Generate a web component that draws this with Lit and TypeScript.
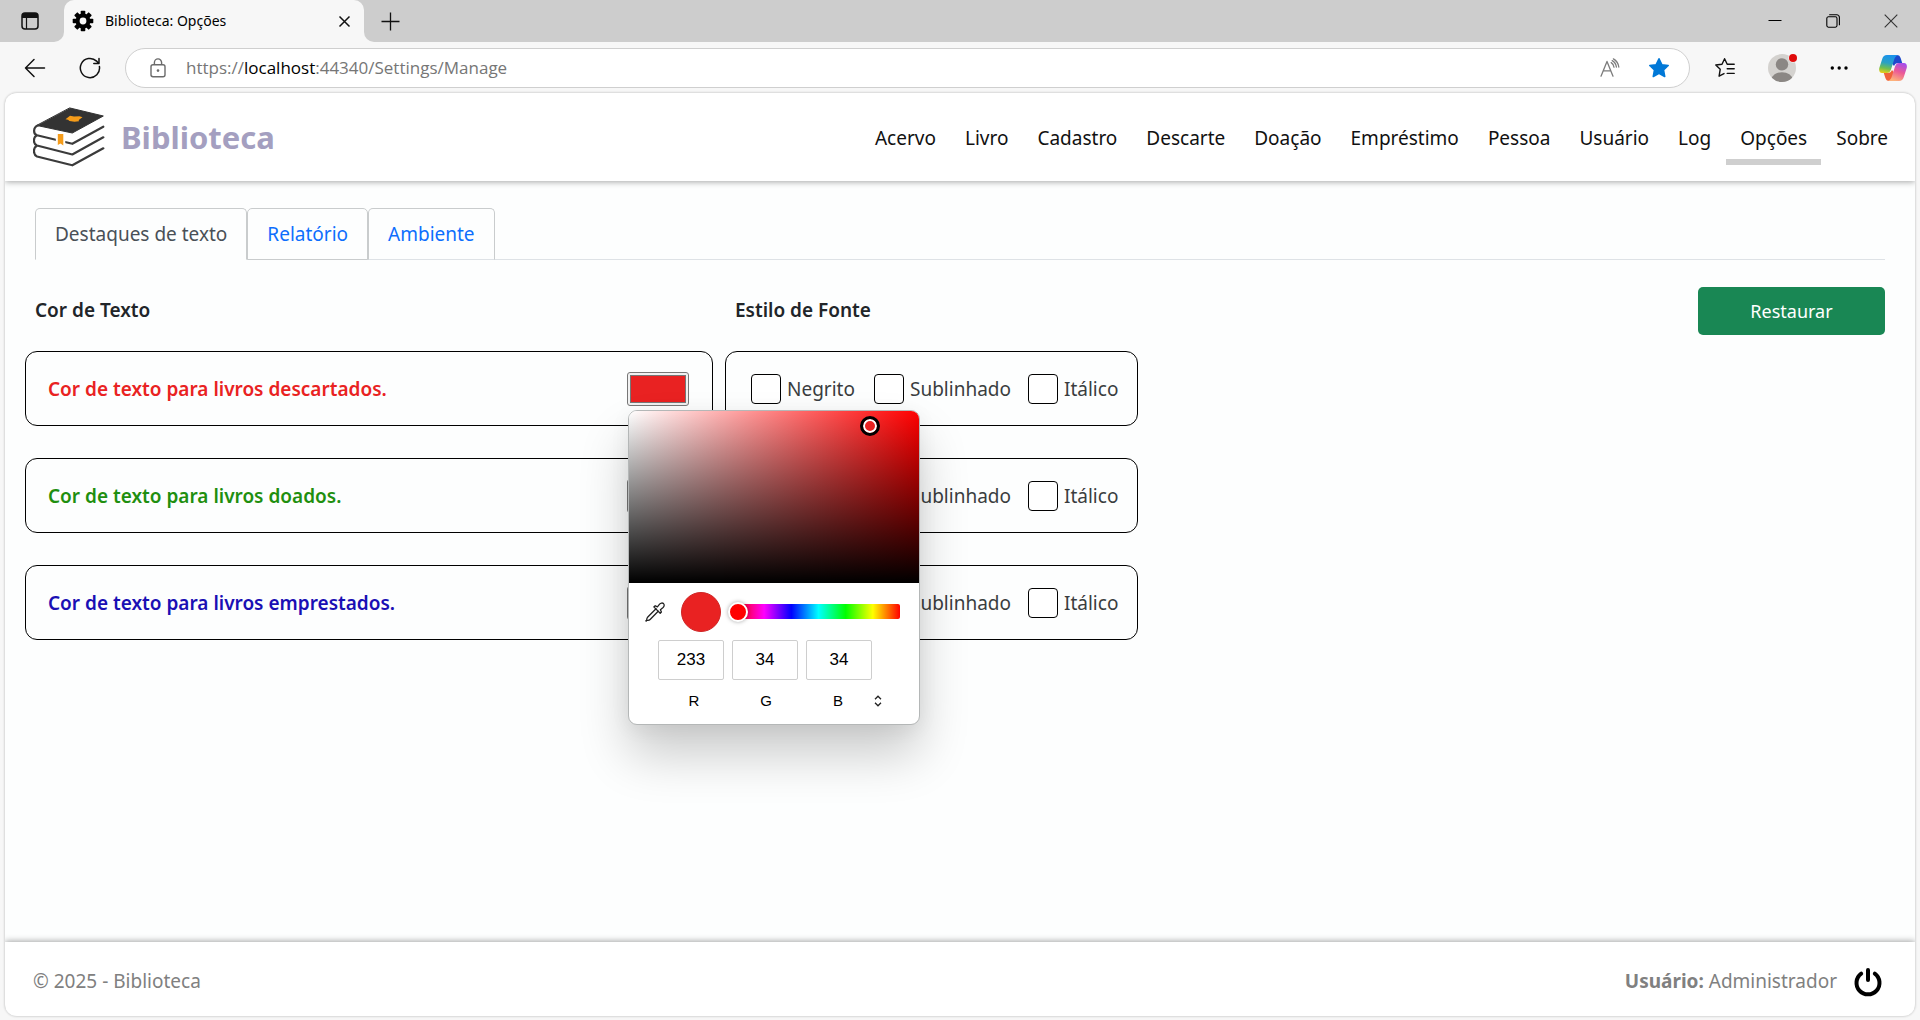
import { LitElement, html, css, svg } from "lit";
import { customElement, property } from "lit/decorators.js";
import { classMap } from "lit/directives/class-map.js";

const baseStyles = css`
  *,
  *::before,
  *::after {
    box-sizing: border-box;
  }
  button {
    margin: 0;
    padding: 0;
    border: 0;
    background: none;
    font: inherit;
    color: inherit;
    cursor: pointer;
  }
  svg {
    display: block;
    flex: none;
  }
  a {
    color: inherit;
    text-decoration: none;
  }
`;

const gearTeeth = [0, 45, 90, 135, 180, 225, 270, 315];

/** Browser window frame: tab strip and address bar. */
@customElement("browser-bar")
class BrowserBar extends LitElement {
  static styles = [
    baseStyles,
    css`
      :host {
        display: block;
        color: #000;
      }
      .strip {
        display: flex;
        height: 42px;
        background: #f7f7f7;
      }
      .strip-start {
        display: flex;
        align-items: center;
        width: 64px;
        padding-left: 20px;
        background: #cdcdcd;
        border-bottom-right-radius: 10px;
      }
      .tab-back {
        width: 300px;
        background: linear-gradient(#cdcdcd 50%, #f7f7f7 50%);
      }
      .tab {
        display: flex;
        align-items: center;
        height: 42px;
        padding: 0 12px 0 8px;
        background: #f7f7f7;
        border-radius: 10px 10px 0 0;
      }
      .tab-title {
        flex: 1;
        padding-left: 11px;
        font-size: 14px;
        line-height: 20px;
      }
      .strip-end {
        flex: 1;
        display: flex;
        align-items: center;
        justify-content: space-between;
        padding-left: 16px;
        background: #cdcdcd;
        border-bottom-left-radius: 10px;
      }
      .window-buttons {
        display: flex;
      }
      .window-button {
        display: grid;
        place-items: center;
        width: 58px;
        height: 42px;
      }
      .toolbar {
        display: flex;
        align-items: center;
        height: 51px;
        padding: 0 10px 0 15px;
        background: #f7f7f7;
      }
      .tool {
        display: grid;
        place-items: center;
        width: 40px;
        height: 40px;
      }
      .nav-tools {
        display: flex;
        gap: 15px;
      }
      .address {
        flex: 1;
        display: flex;
        align-items: center;
        height: 40px;
        margin: 0 15px;
        padding: 0 10px 0 22px;
        background: #fff;
        border: 1px solid #cfcfcf;
        border-radius: 20px;
      }
      .url {
        flex: 1;
        padding-left: 18px;
        font-family: "Open Sans", "Segoe UI", sans-serif;
        font-size: 17px;
        line-height: 24px;
        color: #767676;
      }
      .host-name {
        color: #000;
      }
      .address-tools {
        display: flex;
        gap: 9px;
      }
      .end-tools {
        display: flex;
        gap: 17px;
      }
      .narrow {
        width: 34px;
      }
    `,
  ];

  render() {
    return html`
      <div class="strip">
        <div class="strip-start">
          <button aria-label="Menu de guias">
            <svg width="20" height="20" viewBox="0 0 20 20">
              <rect x="2" y="2" width="16" height="16" rx="3" fill="none" stroke="#111" stroke-width="1.5" />
              <path d="M2 7V5a3 3 0 0 1 3-3h10a3 3 0 0 1 3 3v2z" fill="#111" />
              <path d="M6.5 7v11" stroke="#111" stroke-width="1.2" />
            </svg>
          </button>
        </div>
        <div class="tab-back">
          <div class="tab">
            <svg width="22" height="22" viewBox="-11 -11 22 22">
              ${gearTeeth.map(
                (angle) => svg`<rect x="-2.3" y="-10.3" width="4.6" height="6" rx="0.8" transform="rotate(${angle})" />`,
              )}
              <circle r="5.4" fill="none" stroke="#000" stroke-width="4" />
            </svg>
            <span class="tab-title">Biblioteca: Opções</span>
            <button aria-label="Fechar guia">
              <svg width="16" height="16" viewBox="0 0 16 16">
                <path d="M3.500 3.500l10 10M13.500 3.500L3.500 13.500" stroke="#111" stroke-width="1.5" />
              </svg>
            </button>
          </div>
        </div>
        <div class="strip-end">
          <button aria-label="Nova guia">
            <svg width="20" height="20" viewBox="0 0 20 20">
              <path d="M10.5 1.5v18M1.5 10.5h18" stroke="#111" stroke-width="1.3" />
            </svg>
          </button>
          <div class="window-buttons">
            <button class="window-button" aria-label="Minimizar">
              <svg width="14" height="14" viewBox="0 0 14 14"><path d="M0.5 6.5h13" stroke="#000" /></svg>
            </button>
            <button class="window-button" aria-label="Restaurar janela">
              <svg width="14" height="14" viewBox="0 0 14 14" fill="none" stroke="#000" stroke-width="1.1">
                <rect x="0.8" y="2.8" width="10.2" height="10.4" rx="1.6" />
                <path d="M3.2 0.8h7.6a2.6 2.6 0 0 1 2.6 2.6v7.8" />
              </svg>
            </button>
            <button class="window-button" aria-label="Fechar janela">
              <svg width="14" height="14" viewBox="0 0 14 14">
                <path d="M0.7 0.7l12.6 12.6M13.3 0.7L0.7 13.3" stroke="#333" stroke-width="1.1" />
              </svg>
            </button>
          </div>
        </div>
      </div>
      <div class="toolbar">
        <div class="nav-tools">
          <button class="tool" aria-label="Voltar">
            <svg width="22" height="20" viewBox="0 0 22 20" fill="none" stroke="#111" stroke-width="1.5" stroke-linecap="round" stroke-linejoin="round">
              <path d="M20.5 10H1.5M10 1.5L1.5 10l8.5 8.5" />
            </svg>
          </button>
          <button class="tool" aria-label="Atualizar">
            <svg width="22" height="22" viewBox="0 0 22 22" fill="none" stroke="#111" stroke-width="1.5" stroke-linecap="round" stroke-linejoin="round">
              <path d="M20.4 9.4A9.6 9.6 0 1 1 17.6 4.1L19.6 6.4M20 1.4v5.2h-5.2" />
            </svg>
          </button>
        </div>
        <div class="address">
          <svg width="20" height="20" viewBox="0 0 20 20" fill="none" stroke="#6b6b6b" stroke-width="1.4">
            <rect x="3" y="6.7" width="14" height="12" rx="2" />
            <path d="M6.4 6.7V4.5a3.6 3.6 0 0 1 7.2 0v2.2" />
            <circle cx="10" cy="12.6" r="1.3" fill="#6b6b6b" stroke="none" />
          </svg>
          <span class="url">https://<span class="host-name">localhost</span>:44340/Settings/Manage</span>
          <div class="address-tools">
            <button class="tool" aria-label="Ler em voz alta">
              <svg width="22" height="20" viewBox="0 0 22 20" fill="none" stroke="#7c7c7c" stroke-width="1.3" stroke-linecap="round" stroke-linejoin="round">
                <path d="M2 18.2L8 3.4l6 14.8M4.2 12.8h7.6" />
                <path d="M12.2 4.6c1.6 1 2.6 2.6 2.8 4.6M13.2 2.6c2.4 1.3 3.8 3.4 4.2 6.4M14.4 0.9c3 1.7 4.9 4.6 5.4 8.1" />
              </svg>
            </button>
            <button class="tool" aria-label="Editar favorito">
              <svg width="22" height="22" viewBox="0 0 22 22">
                <path d="M11 1.8l2.8 5.9 6.4.8-4.7 4.5 1.2 6.5L11 16.4l-5.7 3.1 1.2-6.5L1.8 8.5l6.4-.8z" fill="#0078d7" stroke="#0078d7" stroke-width="1.6" stroke-linejoin="round" />
              </svg>
            </button>
          </div>
        </div>
        <div class="end-tools">
          <button class="tool" aria-label="Favoritos">
            <svg width="22" height="22" viewBox="0 0 22 22" fill="none" stroke="#111" stroke-width="1.4" stroke-linecap="round" stroke-linejoin="round">
              <path d="M13.4 7.2h-.2L10.6 1.7 8 7.2l-6.2.8 4.400 4.300-1.100 6.900L10 16.600M13.200 7.200h7M13.200 11.800h7M13.200 16.400h7" />
            </svg>
          </button>
          <button class="tool" aria-label="Perfil">
            <svg width="30" height="30" viewBox="0 0 30 30">
              <clipPath id="face"><circle cx="15" cy="15" r="14" /></clipPath>
              <circle cx="15" cy="15" r="14" fill="#d4d2cf" />
              <g clip-path="url(#face)" fill="#8b8784">
                <circle cx="15" cy="11.4" r="6.2" />
                <ellipse cx="15" cy="26.6" rx="10.4" ry="7.4" />
              </g>
              <circle cx="26" cy="5" r="4.6" fill="#f7f7f7" />
              <circle cx="26" cy="5" r="4" fill="#e00b0b" />
            </svg>
          </button>
          <button class="tool" aria-label="Mais opções">
            <svg width="18" height="6" viewBox="0 0 18 6">
              <circle cx="2.3" cy="3" r="1.7" /><circle cx="9.2" cy="3" r="1.7" /><circle cx="16" cy="3" r="1.7" />
            </svg>
          </button>
          <button class="tool narrow" aria-label="Copilot">
            <svg width="28" height="26" viewBox="0 0 28 26">
              <defs>
                <linearGradient id="cp-left" x1="0.3" y1="0" x2="0.1" y2="1">
                  <stop offset="0" stop-color="#1b93ea" />
                  <stop offset="0.4" stop-color="#2aa1c4" />
                  <stop offset="0.7" stop-color="#6fbf51" />
                  <stop offset="1" stop-color="#f6cf12" />
                </linearGradient>
                <linearGradient id="cp-right" x1="0.8" y1="0" x2="0.4" y2="1">
                  <stop offset="0" stop-color="#a24df0" />
                  <stop offset="0.5" stop-color="#ec5a96" />
                  <stop offset="1" stop-color="#fdb27a" />
                </linearGradient>
              </defs>
              <path d="M12 0h5.500C20 0 21 1 21.800 3.500L23.200 8H19.500c-2.500 0-3.600 1-4.500 3L12.500 8z" fill="#1d49cc" />
              <path d="M16 26h-5.500C8 26 7 25 6.200 22.500L4.800 18H8.500c2.500 0 3.600-1 4.500-3l2.500 3z" fill="#f0623a" />
              <path d="M8 0H19C17 1 16 2 15 5L12 14.500C11 17 10 18 8 18H3C.5 18-.3 15.500.3 13L3.200 4C4 1.200 5.500 0 8 0z" fill="url(#cp-left)" />
              <path d="M20 26H9C11 25 12 24 13 21L16 11.500C17 9 18 8 20 8H25C27.500 8 28.300 10.500 27.700 13L24.800 22C24 24.800 22.500 26 20 26z" fill="url(#cp-right)" />
            </svg>
          </button>
        </div>
      </div>
    `;
  }
}

/** Floating colour palette opened from a colour field. */
@customElement("color-palette")
class ColorPalette extends LitElement {
  @property({ attribute: false }) channels: [string, number][] = [];

  static styles = [
    baseStyles,
    css`
      :host {
        display: block;
        width: 292px;
        overflow: hidden;
        font-family: "Liberation Sans", Arial, sans-serif;
        color: #000;
        background: #fff;
        border: 1px solid #b4b7b7;
        border-radius: 9px;
        box-shadow: 0 30px 50px rgba(0, 0, 0, 0.2), 0 4px 20px rgba(0, 0, 0, 0.06);
      }
      .spectrum {
        position: relative;
        height: 172px;
        background: linear-gradient(to top, #000, transparent), linear-gradient(to right, #fff, #f00);
      }
      .marker {
        position: absolute;
        left: 83%;
        top: 9%;
        width: 20px;
        height: 20px;
        margin: -10px;
        background: #e92222;
        border: 3px solid #000;
        border-radius: 50%;
        box-shadow: inset 0 0 0 2px #fff;
      }
      .mix {
        display: flex;
        align-items: center;
        gap: 16px;
        padding: 9px 19px 8px 16px;
      }
      .swatch {
        width: 40px;
        height: 40px;
        background: #e92222;
        border: 1px solid #cf2525;
        border-radius: 50%;
      }
      .hue {
        flex: 1;
        display: flex;
        height: 15px;
        background: linear-gradient(to right, #f00, #f0f, #00f, #0ff, #0f0, #ff0, #f00);
        border-radius: 2px;
      }
      .hue-range {
        appearance: none;
        flex: 1;
        min-width: 0;
        height: 15px;
        margin: 0 -9px;
        background: none;
      }
      .hue-range::-webkit-slider-runnable-track {
        height: 20px;
        background: none;
      }
      .hue-range::-webkit-slider-thumb {
        appearance: none;
        width: 20px;
        height: 20px;
        background: #f00;
        border: 2px solid #fff;
        border-radius: 50%;
        box-shadow: 0 0 4px rgba(0, 0, 0, 0.35);
      }
      .channels {
        display: flex;
        gap: 8px;
        padding-left: 29px;
      }
      .channel {
        width: 66px;
        height: 40px;
        padding: 0;
        font: 17px "Liberation Sans", Arial, sans-serif;
        text-align: center;
        color: #000;
        background: #fff;
        border: 1px solid #cecece;
        border-radius: 2px;
      }
      .legend {
        display: flex;
        align-items: center;
        padding: 12px 0 14px 29px;
        font-size: 15px;
        line-height: 18px;
      }
      .letter {
        width: 72px;
        text-align: center;
      }
    `,
  ];

  render() {
    return html`
      <div class="spectrum"><div class="marker"></div></div>
      <div class="mix">
        <button aria-label="Conta-gotas">
          <svg width="20" height="20" viewBox="0 0 20 20" fill="none" stroke="#222" stroke-width="1.3" stroke-linejoin="round" stroke-linecap="round">
            <path d="M11 6.8L2.8 15c-1 1-1 2.2-1.2 3-.2.7-1 .6-.6 1 .4.4.4-.4 1.1-.6.8-.2 2 .1 3-.9L13.200 9.200" />
            <path d="M8.800 4.900l1.400-1.200 2.200 1.200 2.200-2.800c1.100-1.300 2.900-1.400 3.900-.5 1 1 .900 2.700-.4 3.900l-2.700 2.200 1 2.300-1.200 1.300z" />
          </svg>
        </button>
        <div class="swatch"></div>
        <div class="hue">
          <input class="hue-range" type="range" min="0" max="360" value="0" aria-label="Matiz" />
        </div>
      </div>
      <div class="channels">
        ${this.channels.map(
          ([letter, value]) => html`<input class="channel" id=${letter} type="text" inputmode="numeric" .value=${String(value)} />`,
        )}
      </div>
      <div class="legend">
        ${this.channels.map(([letter]) => html`<label class="letter" for=${letter}>${letter}</label>`)}
        <button aria-label="Alternar formato">
          <svg width="8" height="12" viewBox="0 0 8 12" fill="none" stroke="#222" stroke-width="1.3">
            <path d="M1 4.200l3-3 3 3M1 7.800l3 3 3-3" />
          </svg>
        </button>
      </div>
    `;
  }
}

/** One setting: colour of the text plus its font styles. */
@customElement("highlight-row")
class HighlightRow extends LitElement {
  @property() label = "";
  @property() color = "#000000";
  @property({ type: Boolean }) open = false;

  static styles = [
    baseStyles,
    css`
      :host {
        display: grid;
        grid-template-columns: 688fr 413fr 745fr;
        gap: 12px;
      }
      .card {
        display: flex;
        align-items: center;
        height: 75px;
        border: 1px solid #000;
        border-radius: 12px;
      }
      .color-card {
        justify-content: space-between;
        padding: 0 23px 0 22px;
      }
      .sample {
        font-size: 19px;
        line-height: 28px;
        font-weight: 600;
      }
      .picker {
        position: relative;
        display: flex;
      }
      .color {
        appearance: none;
        width: 62px;
        height: 34px;
        padding: 2px;
        background: #f1f1f1;
        border: 1px solid #777;
        border-radius: 3px;
      }
      .color::-webkit-color-swatch-wrapper {
        padding: 0;
      }
      .color::-webkit-color-swatch {
        border: 1px solid #777;
        border-radius: 0;
      }
      .palette {
        position: absolute;
        z-index: 5;
        top: 38px;
        left: 1px;
      }
      .style-card {
        display: grid;
        grid-template-columns: 123px 154px auto;
        padding-left: 25px;
      }
      .option {
        display: flex;
        align-items: center;
        gap: 6px;
        font-size: 19px;
        line-height: 28px;
        color: #3a3d40;
      }
      .tick {
        appearance: none;
        flex: none;
        width: 30px;
        height: 30px;
        margin: 0;
        background: #fff;
        border: 1px solid #000;
        border-radius: 4px;
      }
      .tick:checked {
        background: #0d6efd;
      }
    `,
  ];

  render() {
    return html`
      <div class="card color-card">
        <label class="sample" for="color" style="color:${this.color}">${this.label}</label>
        <div class="picker">
          <input class="color" id="color" type="color" .value=${this.color} />
          ${this.open
            ? html`<color-palette class="palette" .channels=${[["R", 233], ["G", 34], ["B", 34]]}></color-palette>`
            : null}
        </div>
      </div>
      <div class="card style-card">
        ${["Negrito", "Sublinhado", "Itálico"].map(
          (name) => html`<label class="option"><input class="tick" type="checkbox" />${name}</label>`,
        )}
      </div>
    `;
  }
}

@customElement("app-root")
class AppRoot extends LitElement {
  static styles = [
    baseStyles,
    css`
      :host {
        display: flex;
        flex-direction: column;
        min-height: 100vh;
        font-family: "Noto Sans", "Segoe UI", sans-serif;
        background: #f7f7f7;
        color: #212529;
      }
      .page {
        flex: 1;
        display: flex;
        flex-direction: column;
        margin: 0 5px 4px;
        overflow: hidden;
        background: #fdfefe;
        border-radius: 12px;
        box-shadow: 0 0 2px 1px rgba(0, 0, 0, 0.13);
      }
      .header {
        display: flex;
        align-items: center;
        justify-content: space-between;
        height: 88px;
        padding: 0 13px 0 28px;
        background: #fff;
        box-shadow: 0 1px 6px rgba(0, 0, 0, 0.35);
      }
      .brand {
        display: flex;
        align-items: center;
        gap: 16px;
        font-size: 31px;
        line-height: 40px;
        font-weight: 700;
        color: #a49fc0;
      }
      .menu {
        display: flex;
        gap: 1px;
      }
      .menu-item {
        padding: 15px 14px 7px;
        font-size: 19px;
        line-height: 28px;
        color: #111;
        border-bottom: 6px solid transparent;
      }
      .menu-item.current {
        border-bottom-color: #cfcfcf;
      }
      .content {
        flex: 1;
        display: flex;
        flex-direction: column;
        padding: 27px 20px;
      }
      .tabs {
        display: flex;
        margin: 0 10px;
        box-shadow: inset 0 -1px #dee2e6;
      }
      .tab {
        height: 52px;
        padding: 0 19px;
        font-size: 19px;
        line-height: 28px;
        color: #0d6efd;
        border: 1px solid #c9cccd;
        border-bottom-color: #dee2e6;
        border-radius: 5px 5px 0 0;
      }
      .tab.middle {
        border-bottom-color: #c9cccd;
      }
      .tab.active {
        color: #495057;
        background: #fdfefe;
        border-bottom-color: #fdfefe;
      }
      .titles {
        display: grid;
        grid-template-columns: 688fr 413fr 745fr;
        gap: 12px;
        padding: 27px 0 16px;
      }
      .title {
        margin: 0;
        padding: 9px 10px;
        font-size: 19px;
        line-height: 28px;
        font-weight: 600;
      }
      .restore {
        justify-self: end;
        width: 187px;
        height: 48px;
        margin-right: 10px;
        font-size: 18px;
        line-height: 28px;
        color: #fff;
        background: #198754;
        border-radius: 5px;
      }
      .rows {
        display: grid;
        gap: 32px;
      }
      .footer {
        display: flex;
        align-items: center;
        justify-content: space-between;
        height: 74px;
        padding: 4px 32px 0 28px;
        font-size: 19px;
        line-height: 28px;
        color: #808080;
        background: #fff;
        box-shadow: 0 -1px 6px rgba(0, 0, 0, 0.35);
      }
      .user {
        display: flex;
        align-items: center;
        gap: 16px;
      }
    `,
  ];

  private menu = ["Acervo", "Livro", "Cadastro", "Descarte", "Doação", "Empréstimo", "Pessoa", "Usuário", "Log", "Opções", "Sobre"];

  render() {
    return html`
      <browser-bar></browser-bar>
      <div class="page">
        <header class="header">
          <a class="brand" href="#">
            <svg width="72" height="60" viewBox="0 0 72 60" fill="none" stroke="#3b3b3b" stroke-width="2.2" stroke-linejoin="round" stroke-linecap="round">
              <path d="M37 1L70.300 9 39.300 26 4 18.500z" fill="#333" stroke="#333" stroke-width="1" />
              <path d="M5 18.500C0 20 0 27 4 28.300L39.300 36.800 70.300 19.700" />
              <path d="M3.500 28.500C0 30.500 0 37 4 38.500L39.300 47.500 70.300 30.300" />
              <path d="M3.500 39C0 41 0 47.500 4 49.500L39.300 58.300 70.300 41.300" />
              <path d="M24.800 27v11l2.700-1.500 2.800 2V27z" fill="#f59c1a" stroke="#fff" stroke-width="4" />
              <path d="M24.800 27v11l2.700-1.500 2.800 2V27z" fill="#f59c1a" stroke="none" />
              <path d="M32.500 12.300l4.500-3.600 4 .9 5.500-.3 3 1-3.800 2.700.3 1.300-4.500.4-5-.6-1.500-1.400z" fill="#f59c1a" stroke="none" />
            </svg>
            <span>Biblioteca</span>
          </a>
          <nav class="menu">
            ${this.menu.map(
              (name) => html`<a href="#" class=${classMap({ "menu-item": true, current: name === "Opções" })}>${name}</a>`,
            )}
          </nav>
        </header>
        <main class="content">
          <div class="tabs" role="tablist">
            <button class="tab active" role="tab" aria-selected="true">Destaques de texto</button>
            <button class="tab middle" role="tab">Relatório</button>
            <button class="tab" role="tab">Ambiente</button>
          </div>
          <div class="titles">
            <h2 class="title">Cor de Texto</h2>
            <h2 class="title">Estilo de Fonte</h2>
            <button class="restore">Restaurar</button>
          </div>
          <div class="rows">
            <highlight-row label="Cor de texto para livros descartados." color="#e92222" open></highlight-row>
            <highlight-row label="Cor de texto para livros doados." color="#1f8f0f"></highlight-row>
            <highlight-row label="Cor de texto para livros emprestados." color="#1a0fb4"></highlight-row>
          </div>
        </main>
        <footer class="footer">
          <span>© 2025 - Biblioteca</span>
          <div class="user">
            <span><strong>Usuário:</strong> Administrador</span>
            <button aria-label="Sair">
              <svg width="30" height="32" viewBox="0 0 30 32" fill="none" stroke="#000" stroke-width="4" stroke-linecap="round">
                <path d="M8.200 8.600A11.500 11.500 0 1 0 21.800 8.600M15 5v10" />
              </svg>
            </button>
          </div>
        </footer>
      </div>
    `;
  }
}
